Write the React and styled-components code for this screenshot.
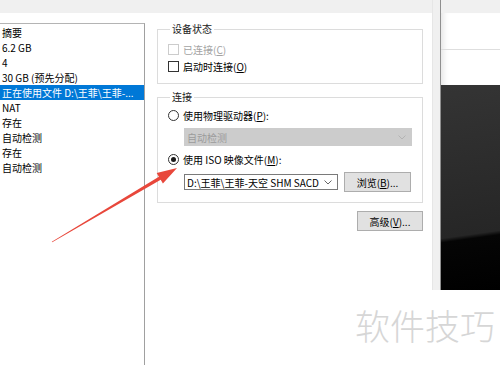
import React from "react";
import styled, { createGlobalStyle } from "styled-components";

const GlobalStyle = createGlobalStyle`
  html, body {
    margin: 0;
    padding: 0;
    background: #fff;
  }
  body {
    font-family: "Noto Sans CJK SC", "Noto Sans", sans-serif;
    font-size: 10px;
    color: #000;
  }
`;

const Screen = styled.div`
  position: relative;
  width: 500px;
  height: 365px;
  overflow: hidden;
  display: flex;
  background: #fff;
`;

const Main = styled.div`
  width: 432px;
  display: flex;
  flex-direction: column;
`;

const TopStrip = styled.div`
  height: 13px;
  flex-shrink: 0;
  background: #f0f0f0;
`;

const MainBody = styled.div`
  flex: 1;
  display: flex;
`;

const ListPane = styled.div`
  width: 146px;
  padding-top: 10px;
  box-sizing: border-box;
  display: flex;
`;

const List = styled.ul`
  flex: 1;
  margin: 0;
  padding: 1px 0 0;
  list-style: none;
  border-top: 1px solid #b4b4b4;
  border-right: 1px solid #a0a0a0;
`;

const ListItem = styled.li`
  height: 15px;
  line-height: 15px;
  padding-left: 2px;
  white-space: nowrap;
  overflow: hidden;
  background: ${(p) => (p.$selected ? "#0078d7" : "transparent")};
  color: ${(p) => (p.$selected ? "#fff" : "#000")};
`;

const Dialog = styled.div`
  flex: 1;
  padding: 10px 9px 0 12px;
  display: flex;
  flex-direction: column;
`;

const GroupBox = styled.fieldset`
  margin: ${(p) => p.$gap || 0}px 0 0;
  padding: ${(p) => p.$pad};
  border: 1px solid #dcdcdc;
  min-width: 0;
`;

const Legend = styled.legend`
  padding: 0 2px;
  margin-left: 2px;
  line-height: 12px;
  color: #1a1a1a;
`;

const OptionRow = styled.label`
  display: flex;
  align-items: center;
  gap: 4px;
  height: 17px;
  color: ${(p) => (p.$disabled ? "#a3a3a3" : "#000")};
`;

const CheckBox = styled.span`
  width: 9px;
  height: 9px;
  border: 1px solid ${(p) => (p.$disabled ? "#cccccc" : "#333")};
  background: #fff;
  flex-shrink: 0;
`;

const Radio = styled.span`
  width: 9px;
  height: 9px;
  border: 1px solid #333;
  border-radius: 50%;
  background: #fff;
  flex-shrink: 0;
  display: flex;
  align-items: center;
  justify-content: center;

  &::after {
    content: "";
    width: 5px;
    height: 5px;
    border-radius: 50%;
    background: ${(p) => (p.$checked ? "#1a1a1a" : "transparent")};
  }
`;

const Key = styled.span`
  text-decoration: underline;
  text-underline-offset: 1px;
`;

const Select = styled.div`
  margin-left: 16px;
  width: ${(p) => p.$width}px;
  height: ${(p) => p.$height}px;
  box-sizing: border-box;
  border: 1px solid ${(p) => (p.$disabled ? "#cccccc" : "#7a7a7a")};
  background: ${(p) => (p.$disabled ? "#cccccc" : "#fff")};
  color: ${(p) => (p.$disabled ? "#9b9b9b" : "#000")};
  display: flex;
  align-items: center;
  justify-content: space-between;
  padding: 0 5px 0 2px;
  white-space: nowrap;
  flex-shrink: 0;
`;

const Chevron = ({ color }) => (
  <svg width="8" height="5" viewBox="0 0 8 5">
    <polyline points="0.5,0.5 4,4 7.5,0.5" fill="none" stroke={color} strokeWidth="0.9" />
  </svg>
);

const FileRow = styled.div`
  display: flex;
  align-items: center;
  gap: 6px;
  height: 20px;
  margin-top: 4px;
`;

const Button = styled.button`
  font: inherit;
  color: #000;
  width: ${(p) => p.$width}px;
  height: 20px;
  padding: 0;
  background: #e1e1e1;
  border: 1px solid #adadad;
  flex-shrink: 0;
`;

const Footer = styled.div`
  display: flex;
  justify-content: flex-end;
  margin-top: 8px;
`;

const Gutter = styled.div`
  width: 9px;
  height: 290px;
  box-sizing: border-box;
  background: #f0f0f0;
  border-left: 1px solid #e6e6e6;
  border-right: 1px solid #8f8f8f;
`;

const RightPane = styled.div`
  flex: 1;
  display: flex;
  flex-direction: column;
`;

const PreviewHeader = styled.div`
  height: 72px;
  display: flex;
  flex-direction: column;
  box-shadow: inset 7px 0 6px -5px rgba(0, 0, 0, 0.12);
`;

const HeaderRow = styled.div`
  flex: 1;
  border-bottom: ${(p) => (p.$line ? "1px solid #dedede" : "none")};
`;

const PreviewDark = styled.div`
  height: 205px;
  background: linear-gradient(172deg, #343434 0%, #262626 72%, #050505 74%, #000 100%);
`;

const Watermark = styled.div`
  position: absolute;
  right: 5px;
  top: 300px;
  font-size: 35px;
  font-weight: 300;
  letter-spacing: 0;
  color: #d6d6d6;
  line-height: 50px;
`;

const Overlay = styled.svg`
  position: absolute;
  left: 0;
  top: 0;
  pointer-events: none;
`;

const items = [
  "摘要",
  "6.2 GB",
  "4",
  "30 GB (预先分配)",
  "正在使用文件 D:\\王菲\\王菲-...",
  "NAT",
  "存在",
  "自动检测",
  "存在",
  "自动检测",
];

export default function App() {
  return (
    <>
      <GlobalStyle />
      <Screen>
        <Main>
          <TopStrip />
          <MainBody>
            <ListPane>
              <List>
                {items.map((t, i) => (
                  <ListItem key={i} $selected={i === 4}>
                    {t}
                  </ListItem>
                ))}
              </List>
            </ListPane>
            <Dialog>
              <GroupBox $pad="6px 10px 8px">
                <Legend>设备状态</Legend>
                <OptionRow $disabled>
                  <CheckBox $disabled />
                  <span>
                    已连接(<Key>C</Key>)
                  </span>
                </OptionRow>
                <OptionRow>
                  <CheckBox />
                  <span>
                    启动时连接(<Key>O</Key>)
                  </span>
                </OptionRow>
              </GroupBox>
              <GroupBox $gap={7} $pad="4px 10px 10px">
                <Legend>连接</Legend>
                <OptionRow>
                  <Radio />
                  <span>
                    使用物理驱动器(<Key>P</Key>):
                  </span>
                </OptionRow>
                <Select $disabled $width={228} $height={18} style={{ marginTop: 4, marginBottom: 5 }}>
                  <span>自动检测</span>
                  <Chevron color="#b0b0b0" />
                </Select>
                <OptionRow>
                  <Radio $checked />
                  <span>
                    使用 ISO 映像文件(<Key>M</Key>):
                  </span>
                </OptionRow>
                <FileRow>
                  <Select $width={154} $height={16}>
                    <span>D:\王菲\王菲-天空 SHM SACD</span>
                    <Chevron color="#555" />
                  </Select>
                  <Button $width={67}>
                    浏览(<Key>B</Key>)...
                  </Button>
                </FileRow>
              </GroupBox>
              <Footer>
                <Button $width={66}>
                  高级(<Key>V</Key>)...
                </Button>
              </Footer>
            </Dialog>
          </MainBody>
        </Main>
        <Gutter />
        <RightPane>
          <TopStrip />
          <PreviewHeader>
            <HeaderRow $line />
            <HeaderRow />
          </PreviewHeader>
          <PreviewDark />
        </RightPane>
        <Watermark>软件技巧</Watermark>
        <Overlay width="500" height="365" viewBox="0 0 500 365">
          <polygon
            points="52.2,242.3 160.7,179.8 162.9,183.4 177,168 156.7,173 158.9,176.7 51.8,241.7"
            fill="#e8473b"
          />
        </Overlay>
      </Screen>
    </>
  );
}
